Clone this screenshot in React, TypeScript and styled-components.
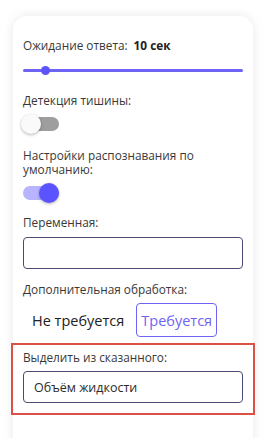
import styled, { createGlobalStyle } from "styled-components";

const GlobalStyle = createGlobalStyle`
  html, body {
    margin: 0;
    padding: 0;
    background: #ffffff;
    font-family: "Open Sans", "Liberation Sans", sans-serif;
    overflow: hidden;
  }
`;

const Page = styled.div`
  width: 266px;
  height: 438px;
  padding: 16px 13px 0 13px;
  box-sizing: border-box;
  overflow: hidden;
`;

const Card = styled.div`
  width: 240px;
  min-height: 460px;
  background: #ffffff;
  border-radius: 14px;
  box-shadow: 0 0 12px rgba(0, 0, 0, 0.09);
  padding: 22px 10px 0 10px;
  box-sizing: border-box;
  display: flex;
  flex-direction: column;
`;

const Label = styled.div<{ $mt?: number }>`
  font-size: 11.8px;
  line-height: 14px;
  color: #383838;
  margin-top: ${(p) => p.$mt ?? 0}px;
`;

const Strong = styled.span`
  font-weight: 700;
  color: #222;
  margin-left: 6px;
`;

const Slider = styled.div`
  position: relative;
  height: 3px;
  background: #6f63f5;
  border-radius: 2px;
  margin-top: 17px;
`;

const SliderThumb = styled.div<{ $left: number }>`
  position: absolute;
  top: -3px;
  left: ${(p) => p.$left}px;
  width: 9px;
  height: 9px;
  border-radius: 50%;
  background: #5d55fb;
`;

const Toggle = styled.div<{ $on?: boolean }>`
  position: relative;
  width: 36px;
  height: 14px;
  border-radius: 7px;
  background: ${(p) => (p.$on ? "#b9b4ff" : "#9e9e9e")};
  margin-top: 10px;
`;

const Knob = styled.div<{ $on?: boolean }>`
  position: absolute;
  top: -3px;
  left: ${(p) => (p.$on ? "16px" : "-2px")};
  width: 20px;
  height: 20px;
  border-radius: 50%;
  background: ${(p) => (p.$on ? "#5b53ff" : "#fafafa")};
  box-shadow: 0 1px 3px rgba(0, 0, 0, 0.3);
`;

const Input = styled.div<{ $mt?: number }>`
  height: 32px;
  border: 1px solid #4b4a72;
  border-radius: 4px;
  box-sizing: border-box;
  margin-top: ${(p) => p.$mt ?? 8}px;
  padding: 0 10px;
  display: flex;
  align-items: center;
  font-size: 12.5px;
  color: #2a2a2a;
`;

const Choice = styled.div`
  display: flex;
  align-items: center;
  gap: 3px;
  margin-top: 7px;
`;

const Option = styled.div<{ $active?: boolean }>`
  height: 34px;
  padding: 0 ${(p) => (p.$active ? 4 : 8)}px;
  display: flex;
  align-items: center;
  font-size: 14.5px;
  border-radius: 4px;
  box-sizing: border-box;
  color: ${(p) => (p.$active ? "#6f63f5" : "#222")};
  border: 1px solid ${(p) => (p.$active ? "#6f63f5" : "transparent")};
`;

const Highlight = styled.div`
  margin: 6px -12px 0 -12px;
  padding: 5px 10px 10px 10px;
  border: 2px solid #dc5046;
  box-sizing: border-box;
`;

export default function App() {
  return (
    <>
      <GlobalStyle />
      <Page>
        <Card>
          <Label>
            Ожидание ответа:<Strong>10 сек</Strong>
          </Label>
          <Slider>
            <SliderThumb $left={18} />
          </Slider>
          <Label $mt={21}>Детекция тишины:</Label>
          <Toggle>
            <Knob />
          </Toggle>
          <Label $mt={17}>Настройки распознавания по умолчанию:</Label>
          <Toggle $on>
            <Knob $on />
          </Toggle>
          <Label $mt={15}>Переменная:</Label>
          <Input />
          <Label $mt={13}>Дополнительная обработка:</Label>
          <Choice>
            <Option>Не требуется</Option>
            <Option $active>Требуется</Option>
          </Choice>
          <Highlight>
            <Label>Выделить из сказанного:</Label>
            <Input $mt={7}>Объём жидкости</Input>
          </Highlight>
        </Card>
      </Page>
    </>
  );
}
